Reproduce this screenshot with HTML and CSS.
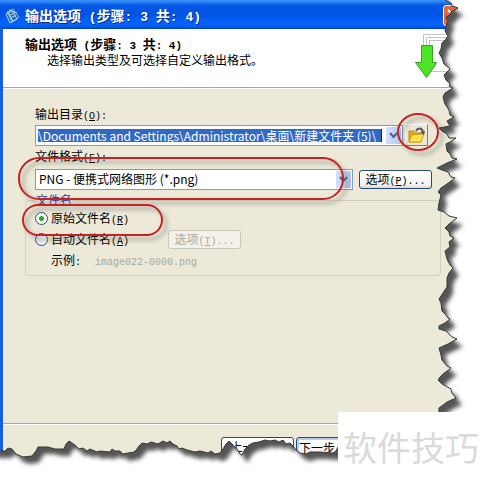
FILE: index.html
```html
<!DOCTYPE html>
<html lang="zh-CN">
<head>
<meta charset="utf-8">
<title>输出选项</title>
<link rel="stylesheet" href="styles.css">
</head>
<body>
<main class="window">
  <header class="titlebar">
    <svg class="app-icon" width="16" height="16" viewBox="0 0 16 16" aria-hidden="true">
      <path d="M2 4 8 1l6 8-7 5z" fill="#1c62b5" stroke="#87bde5"/>
      <path d="m1 6 6-3 5 8-7 4zM4 2l8 3M5 7l5-2M6 10l5-3M3 4l5 9" fill="none" stroke="#b9d9ed"/>
    </svg>
    <h1 class="title">输出选项<span class="latin"> (</span>步骤<span class="latin">: 3 </span>共<span class="latin">: 4)</span></h1>
    <button class="close" type="button" aria-label="关闭"><svg width="19" height="19" viewBox="0 0 19 19"><path d="m4 4 10 10M14 4 4 14" stroke="#fff" stroke-width="2"/></svg></button>
  </header>
  <section class="banner">
    <div class="banner-text">
      <h2 class="heading">输出选项<span class="latin"> (</span>步骤<span class="latin">: 3 </span>共<span class="latin">: 4)</span></h2>
      <p class="subheading">选择输出类型及可选择自定义输出格式。</p>
    </div>
    <svg class="banner-icon" width="44" height="50" viewBox="0 0 44 50" aria-hidden="true">
      <g fill="#fff" stroke="#c4c4c4">
        <path d="M8.500 2.500h34v30h-34z"/><path d="M11.500 5.500h34v30h-34z"/><path d="M14.500 8.500h34v31h-34z"/>
      </g>
      <path d="M7 14h11v17h5L12 46 1 31h6z" fill="#777" opacity=".35"/>
      <path d="M6.500 13.500h11v17h4L11.500 45.500.5 30.500h6z" fill="#4de526" stroke="#36a51d"/>
    </svg>
  </section>
  <form class="content">
    <label class="caption" for="dir">输出目录<span class="latin">(<u>O</u>):</span></label>
    <div class="row">
      <div class="combo">
        <input class="path" id="dir" type="text" value="\Documents and Settings\Administrator\桌面\新建文件夹 (5)\">
        <button class="drop" type="button" aria-label="展开"><svg width="9" height="7" viewBox="0 0 9 7"><path d="m1 1 3.500 4L8 1" fill="none" stroke="#4d6185" stroke-width="2"/></svg></button>
      </div>
      <button class="browse" type="button" aria-label="浏览">
        <svg width="18" height="16" viewBox="0 0 18 16">
          <path d="M1 4h5l1 2h6v9H1z" fill="#dca51c" stroke="#bb8714"/>
          <path d="m4 8 12-1-3 8H1z" fill="#ffe34d" stroke="#d8a01c"/>
          <path d="M8 4c2-4 6-3 7 1" fill="none" stroke="#555" stroke-width="2"/><path d="m12 5 5-1-1 4z" fill="#555"/>
        </svg>
      </button>
    </div>
    <label class="caption" for="format">文件格式<span class="latin">(<u>F</u>):</span></label>
    <div class="row row-format">
      <div class="combo">
        <select class="format" id="format"><option>PNG - 便携式网络图形 (*.png)</option></select>
        <span class="drop"><svg width="9" height="7" viewBox="0 0 9 7"><path d="m1 1 3.500 4L8 1" fill="none" stroke="#4d6185" stroke-width="2"/></svg></span>
      </div>
      <button class="button" type="button">选项<span class="latin">(<u>P</u>)...</span></button>
    </div>
    <fieldset class="names">
      <legend class="legend">文件名</legend>
      <label class="choice"><input class="radio" type="radio" name="naming" checked><span>原始文件名<span class="latin">(<u>R</u>)</span></span></label>
      <div class="auto">
        <label class="choice"><input class="radio" type="radio" name="naming"><span>自动文件名<span class="latin">(<u>A</u>)</span></span></label>
        <button class="button" type="button" disabled>选项<span class="latin">(<u>T</u>)...</span></button>
      </div>
      <p class="example">示例<span class="latin">:</span><span class="latin sample">image022-0000.png</span></p>
    </fieldset>
  </form>
  <footer class="actions">
    <button class="button" type="button">上一步<span class="latin">(<u>B</u>)</span></button>
    <button class="button primary" type="button">下一步</button>
  </footer>
</main>
<svg class="overlay" width="483" height="484" viewBox="0 0 483 484" aria-hidden="true">
  <defs>
    <path id="paper" d="M-9-9H440L445 0 451 3 452 6 458 8 451 12 450 15 446 17 448 21 446 26 445 31 448 36 446 39 442 43 441 49 439 53 442 58 444 64 450 69 447 72 444 75 446 80 450 84 449 86 453 88 445 93 443 97 445 104 449 110 450 115 454 117 447 121 450 126 439 128 442 131 447 134 449 138 456 138 450 142 446 144 447 151 450 154 452 158 457 159 447 163 443 165 437 168 442 170 448 172 451 177 455 178 447 184 441 188 438 192 441 195 439 203 438 210 444 212 449 216 457 218 449 224 445 228 449 232 450 236 454 238 449 242 450 247 445 251 447 259 450 265 453 268 449 273 447 278 447 287 443 293 439 299 441 303 442 311 446 315 448 318 450 319 445 323 439 326 439 329 446 331 452 337 457 339 448 344 439 348 441 355 442 360 447 366 451 368 443 374 440 377 438 380 442 384 451 389 452 393 456 398 447 402 439 408V447H338L336 451 333 453 320 452 310 452 306 454 300 453 296 450 293 446 290 443 286 444 283 440 279 442 275 440 270 441 265 440 259 442 253 443 249 445 245 449 242 455 240 454 237 449 234 446 231 443 229 441 226 444 223 449 220 453 215 454 211 451 208 453 200 451 195 452 187 450 182 448 179 449 177 446 173 444 170 441 167 443 163 441 158 444 151 442 147 444 142 443 139 446 137 449 134 452 128 453 123 454 120 451 115 451 112 449 110 452 100 451 97 452 90 449 87 451 83 448 79 449 75 445 69 441 66 444 64 449 55 449 48 447 38 447 36 451 32 456 23 457 16 454 12 449 8 448 5 451H-9z"/>
    <filter id="soft" x="-10%" y="-10%" width="120%" height="120%"><feGaussianBlur stdDeviation="2"/></filter>
    <filter id="cast" x="-10%" y="-50%" width="130%" height="200%"><feDropShadow dx="4" dy="4" stdDeviation="2" flood-color="#555" flood-opacity=".55"/></filter>
    <mask id="tear"><path d="M0 0H483V484H0z" fill="#fff"/><use href="#paper" fill="#000"/></mask>
  </defs>
  <g fill="none" stroke="#c52222" stroke-width="2" filter="url(#cast)">
    <rect x="19" y="158" width="324" height="41" rx="20"/>
    <rect x="23" y="205" width="139" height="30" rx="15"/>
    <ellipse cx="418" cy="132" rx="20" ry="18"/>
  </g>
  <g mask="url(#tear)">
    <path d="M0 0H483V484H0z" fill="#fff"/>
    <use href="#paper" x="6" y="7" fill="#555" filter="url(#soft)"/>
  </g>
  <use href="#paper" fill="none" stroke="#383834"/>
</svg>
<aside class="brand">软件技巧</aside>
</body>
</html>
```
FILE: styles.css
```css
* { box-sizing: border-box; }
body {
  margin: 0;
  position: relative;
  min-height: 100vh;
  overflow: hidden;
  background: #fff;
  color: #000;
  font: 12px/16px "Noto Sans CJK SC", sans-serif;
}
h1, h2, p { margin: 0; font-size: 12px; line-height: 16px; }
button, input, select { font: inherit; color: inherit; margin: 0; padding: 0; }
.latin { font-family: "Liberation Mono", monospace; font-size: 10px; line-height: 12px; white-space: pre; }
.window {
  display: flex;
  flex-direction: column;
  min-height: 100vh;
  border-left: 3px solid #1460e0;
  background: #ece9d8;
}
.titlebar {
  display: flex;
  align-items: center;
  gap: 4px;
  height: 29px;
  margin-left: -3px;
  padding: 2px 19px 0 5px;
  background: linear-gradient(#3c94ff 0, #2b83f5 2px, #0458e5 5px, #0253e1 14px, #0563fb 22px, #0462f6 26px, #0341b5 29px);
  color: #fff;
}
.title { flex: 1; font-size: 14px; text-shadow: 1px 1px #0b2f86; }
.title .latin { font-size: 13px; }
.heading { font-size: 13px; }
.heading .latin { font-size: 11px; }
.close {
  width: 21px;
  height: 21px;
  border: 1px solid #fff;
  border-radius: 3px;
  background: #df6844;
}
.banner {
  display: flex;
  justify-content: space-between;
  height: 59px;
  padding: 0 24px 0 22px;
  background: #fff;
  border-bottom: 1px solid #aca899;
}
.banner-text { padding-top: 7px; }
.subheading { padding-left: 22px; line-height: 15px; }
.banner-icon { margin-top: 3px; }
.content { flex: 1; padding: 15px 42px 0 22px; border-top: 1px solid #fff; }
.caption { display: block; height: 20px; padding: 2px 10px 0; }
.row { display: flex; align-items: center; gap: 2px; height: 22px; padding: 0 13px 0 10px; }
.row-format { gap: 6px; padding-right: 9px; margin: 2px 0; }
.combo {
  flex: 1;
  display: flex;
  min-width: 0;
  height: 21px;
  padding: 1px;
  border: 1px solid #7f9db9;
  background: #fff;
  position: relative;
}
.path {
  flex: 1;
  min-width: 0;
  height: 13px;
  margin: 2px 4px 0 1px;
  border: 0;
  border-right: 1px solid #222;
  background: #316ac5;
  color: #fff;
  line-height: 13px;
}
.format {
  flex: 1;
  min-width: 0;
  padding: 0 2px;
  border: 0;
  appearance: none;
  background: transparent;
}
.drop {
  display: flex;
  align-items: center;
  justify-content: center;
  width: 15px;
  border: 0;
  border-radius: 1px;
  background: linear-gradient(90deg, #d3dffd, #b4c7f4);
}
.browse {
  display: flex;
  align-items: center;
  justify-content: center;
  width: 23px;
  height: 22px;
  border: 1px solid #fff;
  border-right-color: #817e72;
  border-bottom-color: #817e72;
  background: #ece9d8;
}
.button {
  width: 73px;
  height: 19px;
  border: 1px solid #294a70;
  border-radius: 3px;
  background: linear-gradient(#fff, #f3f3ef 80%, #dcd9cc);
  line-height: 16px;
  white-space: nowrap;
}
.button:disabled { border-color: #c9c7ba; background: #f3f2e9; color: #aca899; }
.names {
  min-width: 0;
  height: 84px;
  margin: 1px 0 0;
  padding: 0 9px;
  border: 1px solid #d0d0bf;
  border-radius: 4px;
}
.legend { height: 16px; padding: 0 1px; color: #2344a8; }
.choice { display: flex; align-items: center; height: 21px; }
.radio {
  width: 13px;
  height: 13px;
  margin-right: 3px;
  appearance: none;
  border: 1px solid #285480;
  border-radius: 50%;
  background: linear-gradient(135deg, #dcdcd7, #fff);
}
.radio:checked { background: radial-gradient(circle, #2aa829 0 2px, #fff 3px); }
.auto { display: flex; align-items: center; justify-content: space-between; width: 206px; }
.example { padding: 2px 16px; }
.sample { padding-left: 14px; color: #aca899; }
.actions {
  display: flex;
  gap: 2px;
  height: 61px;
  padding: 13px 0 0 218px;
  border-top: 1px solid #aca899;
  box-shadow: inset 0 1px #fff;
}
.actions .button { height: 21px; }
.actions .primary { padding-left: 2px; text-align: left; box-shadow: inset 0 0 0 2px #b5cdf3; }
.overlay { position: absolute; top: 0; left: 0; pointer-events: none; }
.brand {
  position: absolute;
  right: 0;
  bottom: 0;
  width: 145px;
  height: 72px;
  padding-left: 5px;
  background: #fff;
  color: #dadada;
  font-size: 34px;
  line-height: 70px;
  white-space: nowrap;
}
```
